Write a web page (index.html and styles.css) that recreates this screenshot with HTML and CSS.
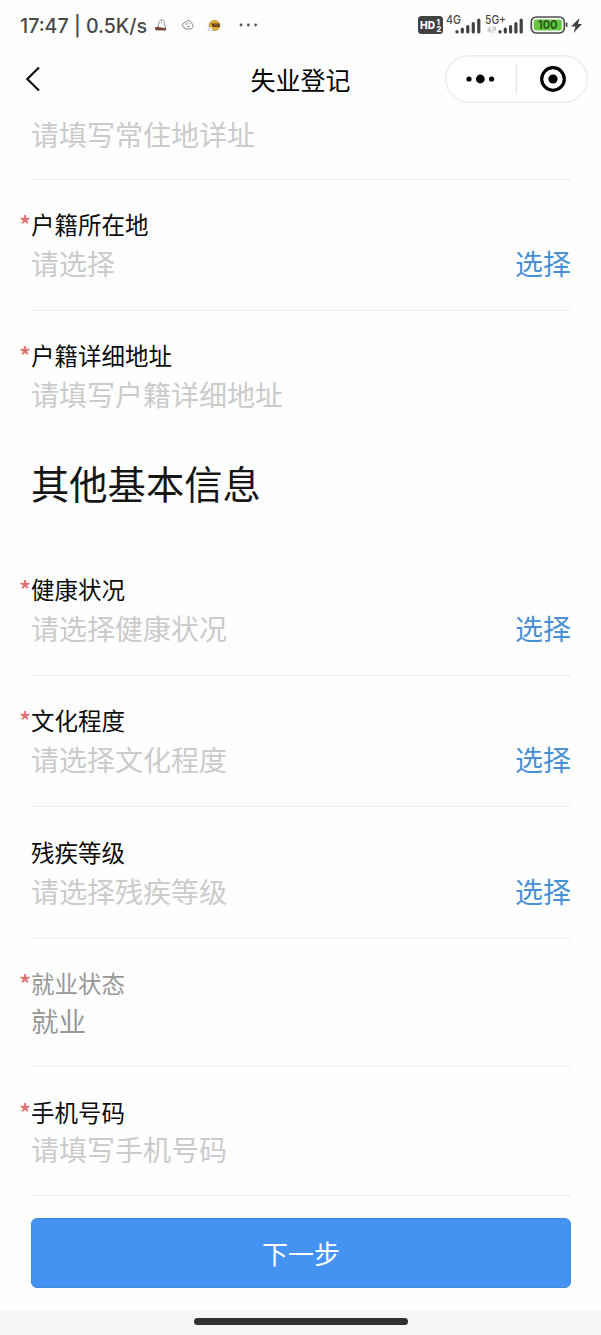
FILE: index.html
```html
<!DOCTYPE html>
<html lang="zh-CN">
<head>
<meta charset="utf-8">
<title>失业登记</title>
<link rel="stylesheet" href="styles.css">
</head>
<body>
<div class="screen">
  <div class="status">
    <span class="status-text">17:47 | 0.5K/s</span>
    <svg class="notices" width="110" height="20" viewBox="0 0 110 20">
      <g fill="#fff" stroke="#77716d" stroke-width=".8">
        <path d="M4 10C5 7 5 4 8 4s3 3 2 5c2 0 2 3 1 4H4z"/>
        <path d="M1 12c3-2 7 1 10 0l1 2H2z" fill="#8e4434" stroke="#5a4540"/>
        <path d="M7 6.500h.8" stroke="#333"/>
        <path d="M29 8c1-2 3-2 4-3 3-1 5 1 5 3 2 1 1 4-1 5h-6l-1-2c-2 0-2-2-1-3zM32 7l1 2m2-2v1m-2 3 3-1" stroke="#666"/>
      </g>
      <ellipse cx="60.500" cy="9.500" rx="5.500" ry="5" fill="#e2ae2b" stroke="#8d702a" stroke-width=".6"/>
      <path d="M57 7.500h8.500v3.500H59z" fill="#533b25"/>
      <path d="M60 9h4" stroke="#cb6b3e"/>
      <path d="M54 14c0-4 3-4 5 0z" fill="#fff" stroke="#aaa" stroke-width=".6"/>
      <g fill="#555"><circle cx="87" cy="9" r="1.400"/><circle cx="94.300" cy="9" r="1.400"/><circle cx="101.600" cy="9" r="1.400"/></g>
    </svg>
    <svg class="signals" width="166" height="24" viewBox="0 0 166 24">
      <rect x="0" y="4" width="25" height="18" rx="3.500" fill="#424242"/>
      <g class="hd"><text x="2" y="17" font-size="11" textLength="15" lengthAdjust="spacingAndGlyphs">HD</text><text x="18.500" y="12.500" font-size="7.500">1</text><text x="18.500" y="20" font-size="7.500">2</text></g>
      <g class="net"><text x="28" y="12" textLength="15" lengthAdjust="spacingAndGlyphs">4G</text><text x="67" y="12" textLength="21" lengthAdjust="spacingAndGlyphs">5G+</text></g>
      <path d="M39 20v-.5M44.300 20v-3M49.800 20v-5.500M55.300 20v-8.500M60.800 20v-12M82 20v-.5M87.300 20v-3M92.600 20v-5.500M97.900 20v-8.500M103.200 20v-12" stroke="#424242" stroke-width="3.200" stroke-linecap="round"/>
      <path d="M72 21v-6l-2.500 4h3.500M75 21v-6h2.500v3h-2.500" fill="none" stroke="#bbb"/>
      <rect x="113.300" y="5" width="33" height="16" rx="5" fill="#fff" stroke="#4b5148" stroke-width="1.700"/>
      <rect x="115.800" y="7.500" width="28" height="11" rx="2.500" fill="#63c83f"/>
      <rect x="147.700" y="10.500" width="1.800" height="4.500" rx=".8" fill="#4b5148"/>
      <text class="charge" x="120" y="17.300" textLength="19.500" lengthAdjust="spacingAndGlyphs">100</text>
      <path d="M161.500 6l-8.500 8.500h4.500l-2 6.500 8.500-9h-4z" fill="#424242"/>
    </svg>
  </div>
  <header class="nav">
    <svg class="back" width="16" height="26" viewBox="0 0 16 26"><path d="M14 1.500L2.300 13 14 24.500" fill="none" stroke="#111" stroke-width="2.200"/></svg>
    <h1 class="title">失业登记</h1>
    <div class="capsule">
      <svg width="143" height="48" viewBox="0 0 143 48">
        <rect x=".7" y=".7" width="141.600" height="46.600" rx="23.300" fill="#fff" stroke="#ececec" stroke-width="1.400"/>
        <path d="M71.500 9v30" stroke="#e6e6e6" stroke-width="1.200"/>
        <circle cx="24" cy="24" r="2.600"/><circle cx="35.300" cy="24" r="4.400"/><circle cx="46.600" cy="24" r="2.600"/>
        <circle cx="108" cy="24" r="11.300" fill="none" stroke="#000" stroke-width="3.200"/><circle cx="108" cy="24" r="4.600"/>
      </svg>
    </div>
  </header>
  <main class="form">
    <section class="field field-first"><div class="value">请填写常住地详址</div></section>
    <section class="field"><div class="label"><span class="star">*</span>户籍所在地</div><div class="value">请选择<span class="pick">选择</span></div></section>
    <section class="field field-plain"><div class="label"><span class="star">*</span>户籍详细地址</div><div class="value">请填写户籍详细地址</div></section>
    <h2 class="heading">其他基本信息</h2>
    <section class="field"><div class="label"><span class="star">*</span>健康状况</div><div class="value">请选择健康状况<span class="pick">选择</span></div></section>
    <section class="field"><div class="label"><span class="star">*</span>文化程度</div><div class="value">请选择文化程度<span class="pick">选择</span></div></section>
    <section class="field field-tall"><div class="label">残疾等级</div><div class="value">请选择残疾等级<span class="pick">选择</span></div></section>
    <section class="field field-disabled"><div class="label"><span class="star">*</span>就业状态</div><div class="value">就业</div></section>
    <section class="field field-phone"><div class="label"><span class="star">*</span>手机号码</div><div class="value">请填写手机号码</div></section>
    <button class="next">下一步</button>
  </main>
  <footer class="gesture"><div class="bar"></div></footer>
</div>
</body>
</html>
```
FILE: styles.css
```css
* { box-sizing: border-box; }
body { margin: 0; background: #fefefe; color: #111; font-family: "Noto Sans CJK SC", sans-serif; }
.screen { width: 601px; height: 1335px; display: flex; flex-direction: column; overflow: hidden; }
.status { height: 50px; flex: none; display: flex; padding: 12px 0 0 20px; align-items: flex-start; }
.status-text { width: 134px; font: 500 19.6px/28px Inter, sans-serif; color: #484848; white-space: nowrap; }
.notices { margin-top: 4px; flex: none; }
.signals { margin-left: 154px; flex: none; font-family: Inter, sans-serif; }
.hd { fill: #fff; font-weight: 800; }
.net { fill: #484848; font-size: 11.5px; font-weight: 500; }
.charge { fill: #28581b; font-size: 12px; font-weight: 700; }
.nav { height: 64px; flex: none; display: grid; grid-template-columns: 1fr 200px 1fr; align-items: start; padding: 5px 13px 0 25px; }
.back { margin-top: 11px; }
.title { margin: 0; font-size: 25px; line-height: 48px; font-weight: 400; text-align: center; color: #000; transform: translateX(-6px); }
.capsule { justify-self: end; width: 143px; height: 48px; }
.capsule svg { display: block; }
.form { flex: 1; padding: 0 30px 0 31px; }
.field { height: 131px; padding-top: 29px; border-bottom: 1px solid #ececec; }
.field-first { height: 66px; padding-top: 0; }
.field-plain { border-bottom: 0; }
.field-tall { height: 132px; padding-top: 30px; }
.field-disabled { height: 128px; }
.field-phone { height: 129px; padding-top: 30px; }
.label { display: flex; height: 34px; font-size: 23.500px; line-height: 30px; color: #0c0c0c; }
.star { width: 12px; margin-left: -12px; font-size: 25px; font-weight: 500; color: #df6f70; }
.value { display: flex; justify-content: space-between; height: 40px; font-size: 28px; line-height: 40px; color: #cbcbcb; }
.pick { color: #4a91d4; }
.field-disabled .label, .field-disabled .value { color: #989898; }
.field-disabled .value { font-size: 27.500px; }
.field-disabled .label, .field-phone .label { height: 32px; }
.heading { margin: 0; height: 103px; font-size: 38.300px; line-height: 82px; font-weight: 400; color: #161616; }
.next { display: block; width: 540px; height: 70px; margin: 22px 0 0; padding: 0; border: 1px solid #438bd9; border-radius: 6px; background: #4492f2; color: #fff; font: 400 26px/68px "Noto Sans CJK SC", sans-serif; }
.gesture { height: 24px; flex: none; padding-top: 7px; background: #f6f6f6; }
.bar { width: 214px; height: 7px; margin: 0 auto; border-radius: 4px; background: #303030; }
```
